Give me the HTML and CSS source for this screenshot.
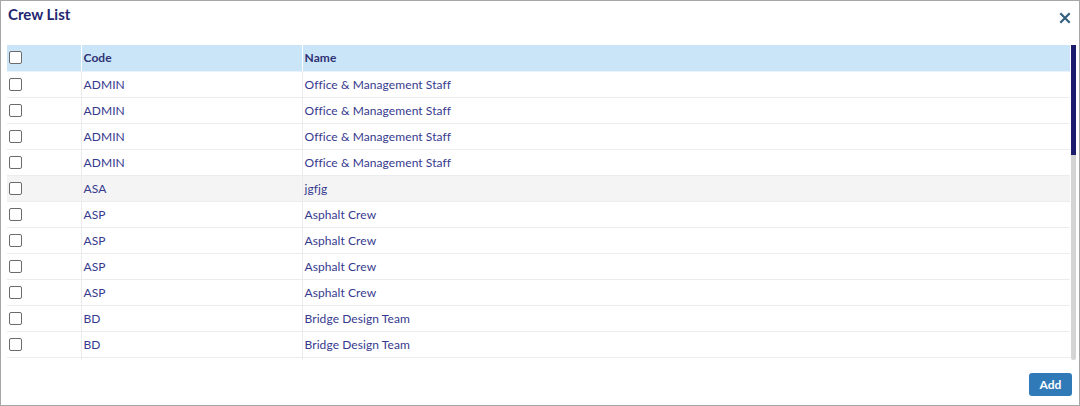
FILE: index.html
```html
<!DOCTYPE html>
<html>
<head>
<meta charset="utf-8">
<link rel="stylesheet" href="styles.css">
</head>
<body>
<div class="dialog">
  <div class="titlebar">
    <h1 class="title">Crew List</h1>
    <button class="close" aria-label="Close">
      <svg width="12" height="12" viewBox="0 0 12 12"><path d="M1.3 1.3 L10.7 10.7 M10.7 1.3 L1.3 10.7" stroke="#34607d" stroke-width="2.2" fill="none"/></svg>
    </button>
  </div>
  <div class="grid-area">
    <div class="grid-view">
      <table class="grid">
        <colgroup><col class="c-chk"><col class="c-code"><col class="c-name"></colgroup>
        <thead>
          <tr><th><span class="cb"></span></th><th>Code</th><th>Name</th></tr>
        </thead>
        <tbody>
          <tr><td><span class="cb"></span></td><td>ADMIN</td><td>Office &amp; Management Staff</td></tr>
          <tr><td><span class="cb"></span></td><td>ADMIN</td><td>Office &amp; Management Staff</td></tr>
          <tr><td><span class="cb"></span></td><td>ADMIN</td><td>Office &amp; Management Staff</td></tr>
          <tr><td><span class="cb"></span></td><td>ADMIN</td><td>Office &amp; Management Staff</td></tr>
          <tr class="alt"><td><span class="cb"></span></td><td>ASA</td><td>jgfjg</td></tr>
          <tr><td><span class="cb"></span></td><td>ASP</td><td>Asphalt Crew</td></tr>
          <tr><td><span class="cb"></span></td><td>ASP</td><td>Asphalt Crew</td></tr>
          <tr><td><span class="cb"></span></td><td>ASP</td><td>Asphalt Crew</td></tr>
          <tr><td><span class="cb"></span></td><td>ASP</td><td>Asphalt Crew</td></tr>
          <tr><td><span class="cb"></span></td><td>BD</td><td>Bridge Design Team</td></tr>
          <tr><td><span class="cb"></span></td><td>BD</td><td>Bridge Design Team</td></tr>
          <tr class="tail"><td></td><td></td><td></td></tr>
        </tbody>
      </table>
    </div>
    <div class="scrollbar"><div class="thumb"></div></div>
  </div>
  <div class="footer">
    <button class="btn-add">Add</button>
  </div>
</div>
</body>
</html>
```

FILE: styles.css
```css
* { box-sizing: border-box; }
html, body { margin: 0; padding: 0; background: #fff; }
body {
  font-family: Lato, "Open Sans", Arial, sans-serif;
  color: #2e3180;
  width: 1080px;
  height: 406px;
  overflow: hidden;
}
.dialog {
  width: 1080px;
  height: 406px;
  border: 1px solid #a6a6a6;
  display: flex;
  flex-direction: column;
  background: #fff;
}
.titlebar {
  display: flex;
  align-items: flex-start;
  justify-content: space-between;
  height: 44px;
  padding: 4px 8px 0 7px;
}
.title {
  margin: 0;
  font-size: 15px;
  font-weight: 700;
  color: #232670;
  line-height: 18px;
}
.close {
  border: 0;
  background: transparent;
  padding: 0;
  width: 12px;
  height: 12px;
  margin-top: 7px;
  display: flex;
}
.grid-area {
  display: flex;
  margin-left: 6px;
  height: 315px;
}
.grid-view {
  width: 1063px;
  height: 315px;
  overflow: hidden;
}
.scrollbar {
  width: 5px;
  margin-left: 1px;
  height: 315px;
  background: #d4d4d4;
  border-radius: 0 0 3px 3px;
  display: flex;
  flex-direction: column;
}
.thumb {
  height: 110px;
  background: #1c1c6e;
}
.grid {
  width: 1063px;
  border-collapse: collapse;
  table-layout: fixed;
  font-size: 12px;
}
.c-chk { width: 74px; }
.c-code { width: 221px; }
.grid th, .grid td {
  height: 26px;
  padding: 0 2px;
  text-align: left;
  vertical-align: middle;
  white-space: nowrap;
  letter-spacing: 0.08px;
}
.grid th {
  background: #cbe5f8;
  font-weight: 700;
  color: #2f3275;
  border-left: 1px solid #fff;
  border-bottom: 1px solid #eaf3fb;
}
.grid td {
  border-left: 1px solid #ececec;
  border-bottom: 1px solid #ececec;
  color: #363a8e;
}
.grid th:first-child, .grid td:first-child { border-left: 0; }
.grid tr.alt td { background: #f4f4f4; }
.cb {
  display: block;
  width: 13px;
  height: 13px;
  border: 1px solid #6b6b6b;
  border-radius: 2px;
  background: #fff;
}
.footer {
  flex: 1;
  display: flex;
  justify-content: flex-end;
  align-items: flex-start;
  padding: 13px 7px 0 0;
}
.btn-add {
  width: 43px;
  height: 23px;
  border: 0;
  border-radius: 3px;
  background: #2f7ab7;
  color: #fff;
  font-family: Lato, Arial, sans-serif;
  font-weight: 700;
  font-size: 12px;
  padding: 0;
}
```
